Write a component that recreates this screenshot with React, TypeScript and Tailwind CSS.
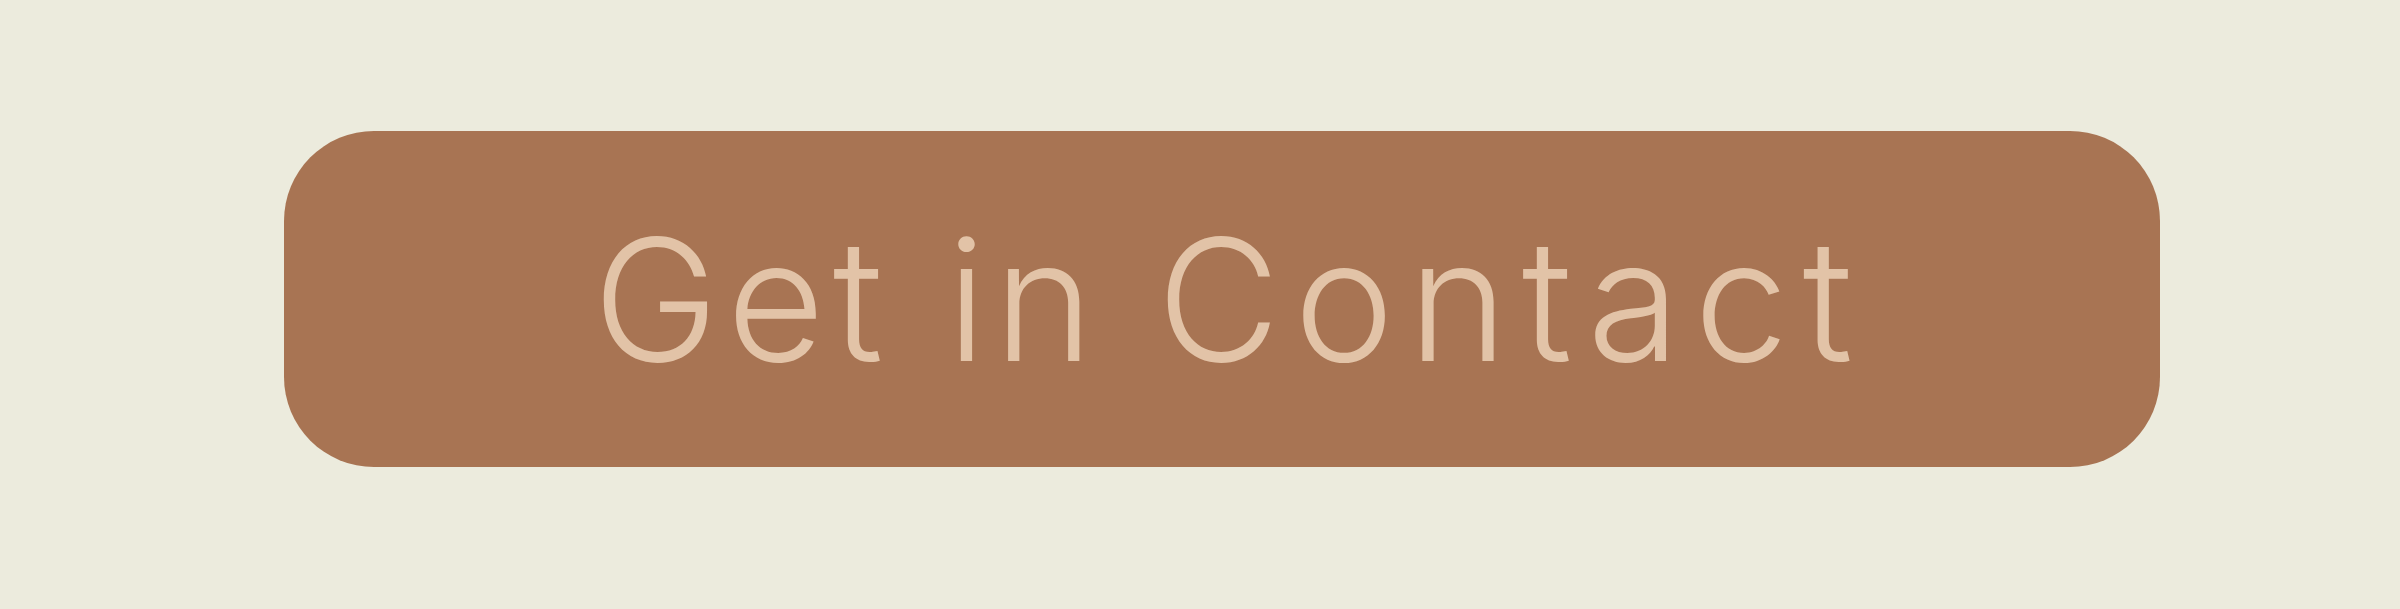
export default function App() {
  return (
    <div className="h-[609px] w-full bg-[#ecebdd] pt-[131px] pl-[284px] pr-[240px]">
      <a
        href="#contact"
        className="flex h-[336px] w-full items-center justify-center rounded-[90px] bg-[#a87453] text-[#e2c3a7] no-underline"
      >
        {/* trailing tracking on the last glyph is balanced by the left padding */}
        <span
          className="whitespace-pre pl-[16px] font-light leading-none text-[169px]"
          style={{ fontFamily: "Inter, 'Noto Sans', sans-serif" }}
        >
          <span className="tracking-[8px]">Get in </span>
          <span className="tracking-[14px]">Contact</span>
        </span>
      </a>
    </div>
  );
}
